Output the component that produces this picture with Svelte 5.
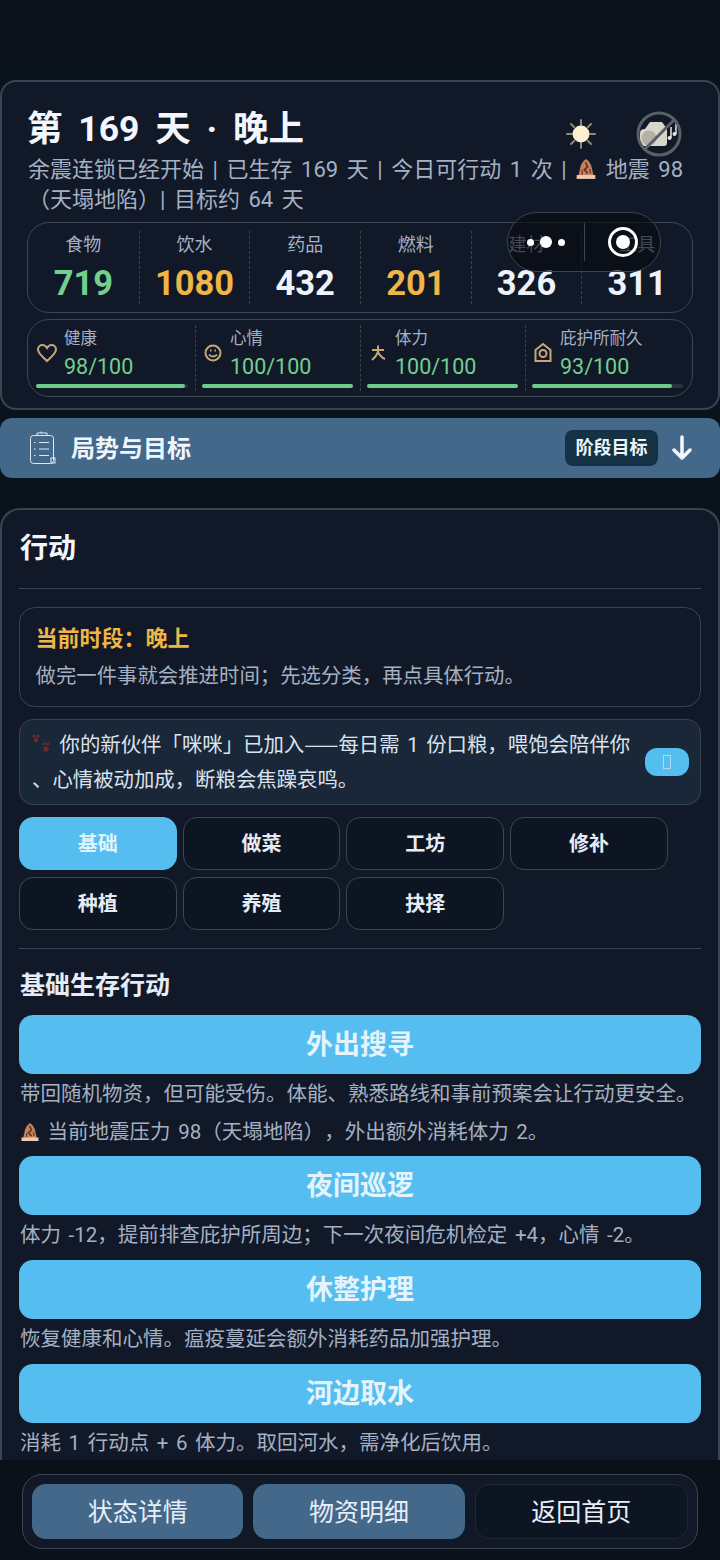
<script>
  const stats = [
    { label: '食物', value: 719, tone: 'green' },
    { label: '饮水', value: 1080, tone: 'amber' },
    { label: '药品', value: 432, tone: '' },
    { label: '燃料', value: 201, tone: 'amber' },
    { label: '建材', value: 326, tone: '' },
    { label: '工具', value: 311, tone: '' }
  ];
  const vitals = [
    { label: '健康', value: 98, icon: 'heart' },
    { label: '心情', value: 100, icon: 'smile' },
    { label: '体力', value: 100, icon: 'run' },
    { label: '庇护所耐久', value: 93, icon: 'home' }
  ];
  const tabs = ['基础', '做菜', '工坊', '修补', '种植', '养殖', '抉择'];
</script>

{#snippet quake(size)}
  <svg class="quake" width={size} height={size} viewBox="0 0 20 20" aria-hidden="true">
    <path d="M10 1 C7 3 5 6 4.500 10 L3 17 H17 L15.500 10 C15 6 13 3 10 1 Z" fill="#c57f5d" />
    <path d="M9.500 4 L11.500 8 L8.500 10.500 L11.500 14" fill="none" stroke="#5b2f25" stroke-width="1.500" />
    <path d="M13.500 10 L14 14 M6.500 11 L6.500 15" stroke="#7a3f2f" stroke-width="1.300" />
    <rect x="1.500" y="15.500" width="17" height="3.500" fill="#f0c9ae" />
  </svg>
{/snippet}

<div class="page">
  <section class="status card">
    <div class="head">
      <h1>第 169 天 · 晚上</h1>
      <svg class="sun" width="30" height="30" viewBox="0 0 30 30" aria-hidden="true">
        <g stroke="#8f8a78" stroke-width="2" stroke-linecap="round">
          <path d="M15 1v5M15 24v5M1 15h5M24 15h5M5 5l3 3M22 22l3 3M25 5l-3 3M8 22l-3 3" />
        </g>
        <circle cx="15" cy="15" r="8.500" fill="#fdf0cf" />
      </svg>
      <svg class="radio" width="46" height="46" viewBox="0 0 46 46" aria-hidden="true">
        <path d="M9 18 L14 11 H26 L31 18 V32 Q31 35 28 35 H8 Q4 35 4 31 V22 Q4 18 9 18 Z" fill="#d8d5cb" />
        <circle cx="13" cy="27" r="7.500" fill="#b3b0a8" />
        <path d="M35 16v11M40 13v10" stroke="#e8e6de" stroke-width="1.500" />
        <circle cx="33.500" cy="27" r="2" fill="#e8e6de" />
        <circle cx="38.500" cy="23" r="2" fill="#e8e6de" />
        <circle cx="23" cy="23" r="21" fill="none" stroke="#5b5f66" stroke-width="3" />
        <path d="M9 38 L38 9" stroke="#5b5f66" stroke-width="3" />
      </svg>
    </div>
    <p class="sub">余震连锁已经开始 | 已生存 169 天 | 今日可行动 1 次 | {@render quake(22)} 地震 98<br />（天塌地陷）| 目标约 64 天</p>

    <div class="stats box">
      {#each stats as s}
        <div class="stat">
          <span class="stat-label">{s.label}</span>
          <strong class="stat-value {s.tone}">{s.value}</strong>
        </div>
      {/each}
    </div>

    <div class="vitals box">
      {#each vitals as v}
        <div class="vital">
          <div class="vital-main">
            <svg class="vital-icon" width="22" height="22" viewBox="0 0 22 22" aria-hidden="true">
              {#if v.icon === 'heart'}
                <path d="M11 19 C7 15 2 11.500 2 7.500 C2 4.500 4.200 3 6.300 3 C8.300 3 10 4.200 11 6 C12 4.200 13.700 3 15.700 3 C17.800 3 20 4.500 20 7.500 C20 11.500 15 15 11 19 Z" />
              {:else if v.icon === 'smile'}
                <circle cx="11" cy="11" r="7.500" />
                <path d="M7 12.500 C9 15 13 15 15 12.500 M8 8.500h1.500M12.500 8.500H14" />
              {:else if v.icon === 'run'}
                <path d="M5 8 H17 M11 3.500 V9 C10.500 12 8.500 15 5 18 M11 10 C12.500 13 14.500 15.500 18 17" />
              {:else}
                <path d="M11 2 L18.500 8 V19 H3.500 V8 Z" />
                <circle cx="11" cy="11.500" r="3.500" />
              {/if}
            </svg>
            <div class="vital-text">
              <span class="vital-label">{v.label}</span>
              <span class="vital-value">{v.value}/100</span>
            </div>
          </div>
          <div class="track"><div class="fill" style="width: {v.value}%"></div></div>
        </div>
      {/each}
    </div>
  </section>

  <button class="goal-bar">
    <svg width="28" height="34" viewBox="0 0 28 34" fill="none" stroke="#dfe9f3" stroke-width="1" aria-hidden="true">
      <rect x="2.500" y="4.500" width="23" height="28" rx="3" />
      <path d="M9 4.500 V2 H19 V4.500 M13 2 V0.500 M11 11.500 H21 M11 18 H21 M11 24.500 H21" />
      <path d="M6 11.500h1.500M6 18h1.500M6 24.500h1.500" />
      <rect x="23" y="27" width="4" height="5" />
    </svg>
    <span class="goal-title">局势与目标</span>
    <span class="goal-tag">阶段目标</span>
    <svg class="goal-arrow" width="24" height="26" viewBox="0 0 24 26" fill="none" stroke="#f4f8fc" stroke-width="3.500" stroke-linecap="round" stroke-linejoin="round" aria-hidden="true">
      <path d="M12 2 V23 M4 15 L12 23 L20 15" />
    </svg>
  </button>

  <section class="actions card">
    <h2>行动</h2>
    <hr />
    <div class="period">
      <h3>当前时段：晚上</h3>
      <p>做完一件事就会推进时间；先选分类，再点具体行动。</p>
    </div>
    <div class="notice">
      <p>
        <svg class="paw" width="20" height="22" viewBox="0 0 20 22" fill="#6e2a2c" aria-hidden="true">
          <circle cx="2" cy="3" r="1.600" /><circle cx="6" cy="3" r="1.600" /><circle cx="4" cy="7" r="2.200" />
          <circle cx="12" cy="11" r="1.600" /><circle cx="16" cy="11" r="1.600" /><circle cx="14" cy="16" r="2.600" />
        </svg>
        你的新伙伴「咪咪」已加入<span class="dash">——</span>每日需 1 份口粮，喂饱会陪伴你<br />、心情被动加成，断粮会焦躁哀鸣。
      </p>
      <button class="close" aria-label="关闭"><i></i></button>
    </div>
    <div class="tabs">
      {#each tabs as t, i}
        <button class="tab" class:on={i === 0}>{t}</button>
      {/each}
    </div>
    <hr class="rule2" />
    <h4>基础生存行动</h4>
    <button class="act">外出搜寻</button>
    <p class="desc">带回随机物资，但可能受伤。体能、熟悉路线和事前预案会让行动更安全。</p>
    <p class="desc warn">{@render quake(20)} 当前地震压力 98（天塌地陷），外出额外消耗体力 2。</p>
    <button class="act">夜间巡逻</button>
    <p class="desc">体力 -12，提前排查庇护所周边；下一次夜间危机检定 +4，心情 -2。</p>
    <button class="act">休整护理</button>
    <p class="desc">恢复健康和心情。瘟疫蔓延会额外消耗药品加强护理。</p>
    <button class="act">河边取水</button>
    <p class="desc">消耗 1 行动点 + 6 体力。取回河水，需净化后饮用。</p>
  </section>

  <div class="capsule" aria-hidden="true">
    <div class="dots"><i></i><i class="big"></i><i></i></div>
    <div class="target"><i></i></div>
  </div>

  <nav class="dock">
    <div class="dock-inner">
      <button class="dock-btn">状态详情</button>
      <button class="dock-btn">物资明细</button>
      <button class="dock-btn ghost">返回首页</button>
    </div>
  </nav>
</div>

<style>
  :global(body) {
    background: #0a1119;
    font-family: Roboto, "Noto Sans CJK SC", sans-serif;
    text-spacing-trim: space-all;
    word-spacing: 2.500px;
  }
  .page {
    position: relative;
    height: 1560px;
    overflow: hidden;
    padding-top: 80px;
    box-sizing: border-box;
    background: linear-gradient(#0b121b, #09131b 500px);
    color: #e8eef8;
  }
  button {
    font-family: inherit;
    cursor: pointer;
    border: 0;
  }
  h1, h2, h3, h4, p {
    margin: 0;
  }
  .card {
    background: #111928;
    border: 2px solid #3a4351;
    box-sizing: border-box;
  }
  .status {
    height: 330px;
    border-radius: 16px;
    padding: 25px 26px 0 26px;
  }
  .head {
    display: flex;
    align-items: center;
    height: 44px;
  }
  h1 {
    font-size: 35.500px;
    line-height: 44px;
    font-weight: 700;
    word-spacing: 7px;
    color: #f3f6fc;
    flex: 1;
    margin-left: -1px;
  }
  .sun {
    margin-right: 40px;
    margin-top: 9px;
  }
  .radio {
    margin-right: 10px;
    margin-top: 9px;
  }
  .sub {
    margin-top: 4px;
    font-size: 22px;
    line-height: 30px;
    word-spacing: 3.100px;
    color: #a5b0c2;
    white-space: nowrap;
  }
  .quake {
    vertical-align: -3px;
  }
  .box {
    border: 1.500px solid #3e4655;
    border-radius: 22px;
    box-sizing: border-box;
    width: 666px;
    margin-left: -1px;
  }
  .stats {
    display: grid;
    grid-template-columns: repeat(6, 1fr);
    margin-top: 7px;
    height: 91px;
    padding: 8px 0;
  }
  .stat {
    display: flex;
    flex-direction: column;
    align-items: center;
    border-left: 1px dashed #39414f;
  }
  .stat:first-child {
    border-left: 0;
  }
  .stat-label {
    font-size: 18px;
    line-height: 28px;
    color: #a5b0c2;
  }
  .stat-value {
    font-size: 34.500px;
    line-height: 42px;
    margin-top: 3px;
    font-weight: 700;
    color: #eef2fb;
  }
  .green { color: #74cf8e; }
  .amber { color: #efb545; }
  .vitals {
    display: grid;
    grid-template-columns: repeat(4, 1fr);
    margin-top: 6px;
    height: 78px;
    padding: 5px 4px 0 0;
  }
  .vital {
    padding: 0 5px 0 6px;
    margin-left: 2px;
    border-left: 1px dashed #39414f;
    height: 66px;
  }
  .vital:first-child {
    border-left: 0;
    margin-left: 0;
    padding-left: 8px;
  }
  .vital-main {
    display: flex;
    align-items: center;
    gap: 6px;
    height: 56px;
  }
  .vital-icon {
    fill: none;
    stroke: #c7a77a;
    stroke-width: 2;
    flex: none;
  }
  .vital-text {
    display: flex;
    flex-direction: column;
  }
  .vital-label {
    font-size: 16.500px;
    line-height: 26px;
    color: #a5b0c2;
  }
  .vital-value {
    font-size: 21.500px;
    line-height: 28px;
    margin-top: 1px;
    color: #74cf8e;
  }
  .track {
    height: 4px;
    border-radius: 2px;
    background: #2a3340;
    margin-top: 3px;
  }
  .fill {
    height: 100%;
    border-radius: 2px;
    background: #6fcb8c;
  }
  .goal-bar {
    display: flex;
    align-items: center;
    width: 100%;
    height: 60px;
    margin-top: 8px;
    padding: 0 26px 0 28px;
    background: #44688a;
    border-radius: 12px;
    color: #eef5fb;
  }
  .goal-title {
    font-size: 24px;
    font-weight: 700;
    margin-left: 15px;
    padding-bottom: 4px;
    flex: 1;
    text-align: left;
  }
  .goal-tag {
    font-size: 18px;
    font-weight: 700;
    line-height: 36px;
    padding: 0 10.500px;
    border-radius: 8px;
    background: #143244;
  }
  .goal-arrow {
    margin-left: 12px;
  }
  .actions {
    margin-top: 30px;
    height: 1100px;
    padding: 17px 17px 0 17px;
    border-radius: 20px 20px 0 0;
  }
  h2 {
    font-size: 28px;
    line-height: 44px;
    font-weight: 700;
    color: #f3f6fc;
    padding-left: 1px;
  }
  hr {
    border: 0;
    height: 1px;
    background: #3a4351;
    margin: 17px 0 18px 0;
  }
  .period {
    border: 1.500px solid #3a4351;
    border-radius: 16px;
    height: 100px;
    box-sizing: border-box;
    padding: 15px 15.500px 0 15.500px;
  }
  h3 {
    font-size: 22px;
    line-height: 32px;
    font-weight: 700;
    color: #efb545;
  }
  .period p {
    margin-top: 6px;
    font-size: 20.400px;
    line-height: 30px;
    color: #a5b0c2;
  }
  .notice {
    display: flex;
    align-items: center;
    margin-top: 12px;
    height: 86px;
    box-sizing: border-box;
    padding: 0 11px 0 12px;
    background: #1a2738;
    border: 1.500px solid #3a4351;
    border-radius: 14px;
  }
  .notice p {
    flex: 1;
    font-size: 20.400px;
    line-height: 35px;
    white-space: nowrap;
    color: #dbe3ee;
  }
  .dash {
    font-family: "Noto Sans CJK SC", sans-serif;
  }
  .paw {
    vertical-align: -3px;
  }
  .close {
    flex: none;
    width: 44px;
    height: 28px;
    border-radius: 12px;
    background: #55bdf0;
    display: flex;
    align-items: center;
    justify-content: center;
    padding: 0;
  }
  .close i {
    display: block;
    width: 6px;
    height: 12px;
    border: 1px solid #a9dcf5;
  }
  .tabs {
    display: flex;
    flex-wrap: wrap;
    gap: 7px 6px;
    margin-top: 12px;
  }
  .tab {
    width: 157.700px;
    height: 53px;
    padding: 0 0 3px 0;
    border: 1.500px solid #3e4655;
    border-radius: 14px;
    background: #0e1522;
    color: #e6ecf6;
    font-size: 20px;
    font-weight: 700;
  }
  .tab.on {
    background: #55bdf0;
    border-color: #55bdf0;
    color: #dff3fd;
  }
  .rule2 {
    margin: 18px 0 19px 0;
  }
  h4 {
    font-size: 25px;
    line-height: 36px;
    font-weight: 700;
    color: #e6ecf6;
    padding-left: 1px;
    margin-bottom: 11px;
  }
  .act {
    display: block;
    width: 100%;
    height: 59px;
    padding: 0 0 4px 0;
    border-radius: 14px;
    background: #55bdf0;
    color: #e3f4fd;
    font-size: 27px;
    font-weight: 700;
  }
  .desc {
    font-size: 20.500px;
    line-height: 30px;
    padding: 5px 0 10px 1px;
    color: #a5b0c2;
  }
  .desc.warn {
    margin-top: -2px;
    padding: 0 0 9px 1px;
  }
  .capsule {
    position: absolute;
    left: 507px;
    top: 212px;
    width: 154px;
    height: 60px;
    box-sizing: border-box;
    display: flex;
    border: 1.500px solid #3d4450;
    border-radius: 30px;
    background: rgba(6, 9, 14, 0.62);
  }
  .dots {
    width: 76px;
    display: flex;
    align-items: center;
    justify-content: center;
    gap: 6px;
    border-right: 1px solid #3d4450;
    margin: 10px 0;
  }
  .dots i {
    width: 7px;
    height: 7px;
    border-radius: 50%;
    background: #fff;
  }
  .dots i.big {
    width: 12px;
    height: 12px;
  }
  .target {
    flex: 1;
    display: flex;
    align-items: center;
    justify-content: center;
  }
  .target i {
    display: block;
    width: 14px;
    height: 14px;
    border-radius: 50%;
    background: #fff;
    outline: 3px solid #fff;
    outline-offset: 5px;
  }
  .dock {
    position: absolute;
    left: 0;
    right: 0;
    bottom: 0;
    height: 100px;
    background: #0a1119;
    padding: 14px 22px 11px 22px;
    box-sizing: border-box;
  }
  .dock-inner {
    display: flex;
    gap: 10px;
    height: 100%;
    box-sizing: border-box;
    padding: 9px 9px;
    background: #111928;
    border: 1.500px solid #3e4655;
    border-radius: 20px;
  }
  .dock-btn {
    flex: 1;
    padding: 0 0 4px 0;
    border-radius: 14px;
    background: #44688a;
    color: #e8eef8;
    font-size: 25px;
  }
  .dock-btn.ghost {
    background: #0e1522;
    border: 1px solid #1f2836;
  }
</style>
